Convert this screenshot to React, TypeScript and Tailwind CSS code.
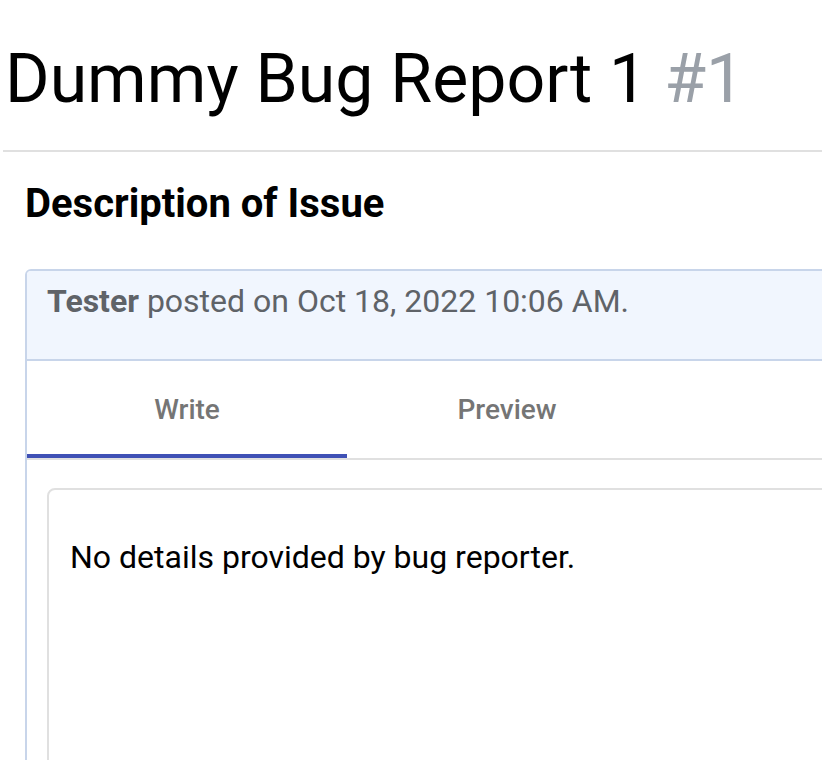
export default function App() {
  return (
    <div className="h-[760px] w-[822px] overflow-hidden bg-white font-['Roboto',sans-serif]">
      {/* Title */}
      <div className="ml-[3px] border-b-2 border-[#e0e0e0] pt-[37px] pb-[29px]">
        <h1 className="ml-[2px] whitespace-nowrap text-[68px] leading-[84px] font-normal text-black">
          Dummy Bug Report 1 <span className="text-[#9aa0a8]">#1</span>
        </h1>
      </div>

      <div className="pl-[25px]">
        <h2 className="mt-[28px] whitespace-nowrap text-[40px] leading-[48px] font-bold text-black">
          Description of Issue
        </h2>

        {/* Card */}
        <div className="mt-[41px] w-[900px] rounded-tl-[6px] border-2 border-[#c8d5ea]">
          <div className="h-[88px] rounded-tl-[4px] bg-[#f1f6fe] px-[20px] pt-[10px] text-[32px] leading-[40px] text-[#5f6368] whitespace-nowrap">
            <span className="font-bold">Tester</span> posted on Oct 18, 2022 10:06 AM.
          </div>
          <div className="border-t-2 border-[#c8d5ea] bg-white">
            <div className="flex border-b-2 border-[#e0e0e0]">
              <div className="flex h-[97px] w-[320px] items-center justify-center border-b-4 border-[#3f51b5] pt-[4px] text-[28px] font-medium text-[#757575]">
                Write
              </div>
              <div className="flex h-[97px] w-[320px] items-center justify-center text-[28px] font-medium text-[#757575]">
                Preview
              </div>
            </div>
            <div className="px-[20px] pt-[28px]">
              <div className="h-[320px] rounded-tl-[8px] border-2 border-[#e0e0e0] pl-[21px] pt-[47px] text-[32px] leading-[40px] text-black whitespace-nowrap">
                No details provided by bug reporter.
              </div>
            </div>
          </div>
        </div>
      </div>
    </div>
  );
}
